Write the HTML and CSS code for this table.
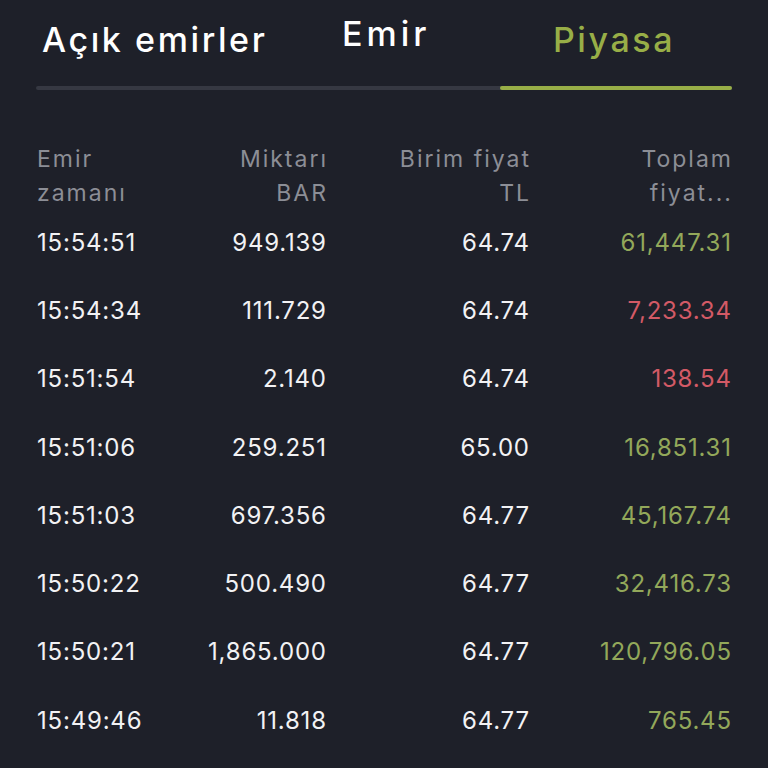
FILE: index.html
```html
<!DOCTYPE html>
<html lang="tr">
<head>
<meta charset="utf-8">
<link rel="stylesheet" href="styles.css">
</head>
<body>
<div class="screen">
  <div class="tabs">
    <div class="tab tab-open">Açık emirler</div>
    <div class="tab tab-order">Emir</div>
    <div class="tab tab-market active">Piyasa</div>
  </div>
  <div class="track"><div class="track-fill"></div></div>
  <div class="table">
    <div class="row head">
      <div class="c c1">Emir<br>zamanı</div>
      <div class="c c2">Miktarı<br>BAR</div>
      <div class="c c3">Birim fiyat<br>TL</div>
      <div class="c c4">Toplam<br>fiyat...</div>
    </div>
    <div class="row"><div class="c c1">15:54:51</div><div class="c c2">949.139</div><div class="c c3">64.74</div><div class="c c4 up">61,447.31</div></div>
    <div class="row"><div class="c c1">15:54:34</div><div class="c c2">111.729</div><div class="c c3">64.74</div><div class="c c4 down">7,233.34</div></div>
    <div class="row"><div class="c c1">15:51:54</div><div class="c c2">2.140</div><div class="c c3">64.74</div><div class="c c4 down">138.54</div></div>
    <div class="row"><div class="c c1">15:51:06</div><div class="c c2">259.251</div><div class="c c3">65.00</div><div class="c c4 up">16,851.31</div></div>
    <div class="row"><div class="c c1">15:51:03</div><div class="c c2">697.356</div><div class="c c3">64.77</div><div class="c c4 up">45,167.74</div></div>
    <div class="row"><div class="c c1">15:50:22</div><div class="c c2">500.490</div><div class="c c3">64.77</div><div class="c c4 up">32,416.73</div></div>
    <div class="row"><div class="c c1">15:50:21</div><div class="c c2">1,865.000</div><div class="c c3">64.77</div><div class="c c4 up">120,796.05</div></div>
    <div class="row"><div class="c c1">15:49:46</div><div class="c c2">11.818</div><div class="c c3">64.77</div><div class="c c4 up">765.45</div></div>
  </div>
</div>
</body>
</html>
```
FILE: styles.css
```css
html, body {
  margin: 0;
  padding: 0;
  background: #1e2029;
}
.screen {
  width: 768px;
  height: 768px;
  overflow: hidden;
  background: #1e2029;
  font-family: "Inter", "Lato", sans-serif;
  color: #ffffff;
}
.tabs {
  display: flex;
  height: 86px;
  padding: 0 36px;
  box-sizing: border-box;
}
.tab {
  font-size: 34px;
  font-weight: 500;
  letter-spacing: 2.6px;
}
.tab-open {
  width: 306px;
  padding-left: 6px;
  padding-top: 19px;
  box-sizing: border-box;
}
.tab-order {
  width: 158px;
  padding-top: 13px;
  letter-spacing: 4px;
}
.tab-market {
  flex: 1;
  text-align: center;
  padding-top: 19px;
  padding-right: 4px;
}
.active { color: #98ae47; }
.track {
  margin: 0 36px;
  height: 4px;
  background: #363842;
  border-radius: 2px;
  display: flex;
  justify-content: flex-end;
}
.track-fill {
  width: 232px;
  height: 4px;
  background: #98ae47;
  border-radius: 2px;
}
.table {
  padding: 52px 37px 0 37px;
}
.row {
  display: grid;
  grid-template-columns: 150px 139px 203px 202px;
  height: 68.3px;
  align-items: center;
  font-size: 24px;
  letter-spacing: 0.8px;
  color: #f2f2f4;
}
.row.head {
  align-items: start;
  font-size: 23px;
  letter-spacing: 2px;
  line-height: 34px;
  color: #8c8e96;
  height: 66px;
}
.c1 { text-align: left; }
.c2, .c3, .c4 { text-align: right; margin-right: -0.8px; }
.head .c2, .head .c3, .head .c4 { margin-right: -2px; }
.up { color: #93a85a; }
.down { color: #d35a66; }
```
